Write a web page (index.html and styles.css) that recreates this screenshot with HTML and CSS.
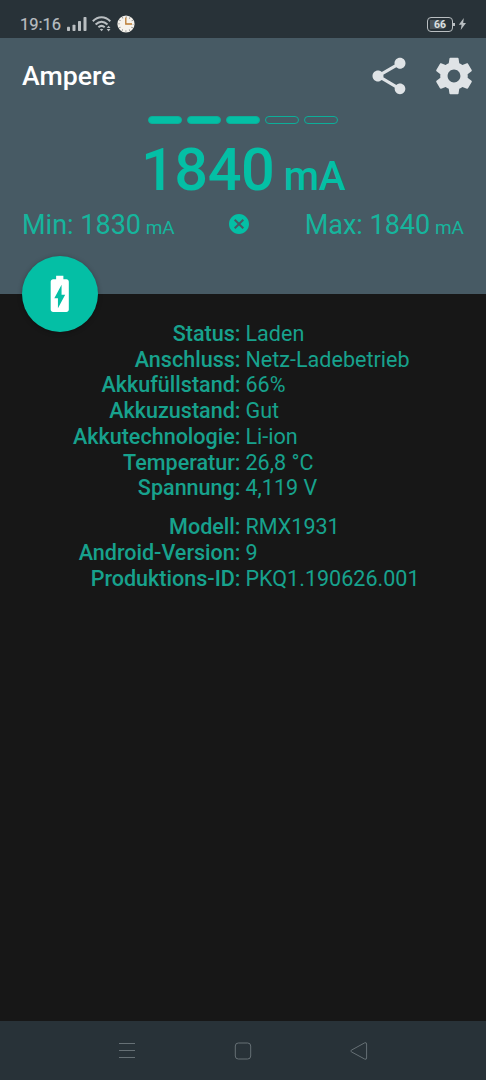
FILE: index.html
```html
<!DOCTYPE html>
<html lang="de">
<head>
<meta charset="utf-8">
<title>Ampere</title>
<link rel="stylesheet" href="styles.css">
</head>
<body>
<div class="screen">
  <div class="statusbar">
    <span class="time">19:16</span>
    <svg class="signal" width="20" height="14" viewBox="0 0 20 14"><rect x="0" y="9.7" width="3" height="4.3" rx=".7"/><rect x="5.5" y="7.7" width="3" height="6.3" rx=".7"/><rect x="11" y="4" width="3" height="10" rx=".7"/><rect x="16.5" y="0" width="3" height="14" rx=".7"/></svg>
    <svg class="wifi" width="20" height="16" viewBox="0 0 20 16"><g fill="none" stroke="#b9bec1" stroke-width="2"><path d="M.8 5.2C6-.1 13-.1 18.3 5.2"/><path d="M3.6 8.5C7.3 4.9 11.8 4.9 15.5 8.5"/><path d="M6.4 11.3C8.5 9.4 10.6 9.4 12.7 11.3"/></g><path d="M7.8 13.3Q9.6 12 11.3 13.3L9.6 15.3z M14.7 12l1.9-2.3 1.9 2.3z M14.7 13.1h3.8l-1.9 2.3z"/></svg>
    <svg class="clock" width="18" height="18" viewBox="0 0 18 18"><circle cx="9" cy="9" r="8.6" fill="#f5f2ec"/><circle cx="9" cy="9" r="7" fill="none" stroke="#777" stroke-width="1.3" stroke-dasharray=".8 2.865" stroke-dashoffset=".4"/><path d="M8.8 2.5V9H15" fill="none" stroke="#b9792f" stroke-width="1.3"/></svg>
    <span class="power">
      <span class="battery">66</span>
      <svg width="9" height="12" viewBox="0 0 9 12"><path d="M5.8 0L.8 6.8h2.8L2.7 12 8 5H5.2z"/></svg>
    </span>
  </div>
  <header class="header">
    <div class="appbar">
      <h1 class="title">Ampere</h1>
      <svg class="share" viewBox="0 0 24 24"><path d="M18 16.08c-.76 0-1.44.3-1.96.77L8.91 12.7c.05-.23.09-.46.09-.7s-.04-.47-.09-.7l7.05-4.11c.54.5 1.25.81 2.04.81 1.66 0 3-1.34 3-3s-1.34-3-3-3-3 1.34-3 3c0 .24.04.47.09.7L8.04 9.81C7.5 9.31 6.79 9 6 9c-1.66 0-3 1.34-3 3s1.34 3 3 3c.79 0 1.5-.31 2.04-.81l7.12 4.16c-.05.21-.08.43-.08.65 0 1.61 1.31 2.92 2.92 2.92s2.92-1.31 2.92-2.92-1.31-2.92-2.92-2.92z"/></svg>
      <svg class="gear" viewBox="0 0 24 24"><path d="M19.43 12.98c.04-.32.07-.64.07-.98s-.03-.66-.07-.98l2.11-1.65c.19-.15.24-.42.12-.64l-2-3.46c-.12-.22-.39-.3-.61-.22l-2.49 1c-.52-.4-1.08-.73-1.69-.98l-.38-2.65C14.46 2.18 14.25 2 14 2h-4c-.25 0-.46.18-.49.42l-.38 2.65c-.61.25-1.17.59-1.69.98l-2.49-1c-.23-.09-.49 0-.61.22l-2 3.46c-.13.22-.07.49.12.64l2.11 1.65c-.04.32-.07.65-.07.98s.03.66.07.98l-2.11 1.65c-.19.15-.24.42-.12.64l2 3.46c.12.22.39.3.61.22l2.49-1c.52.4 1.08.73 1.69.98l.38 2.65c.03.24.24.42.49.42h4c.25 0 .46-.18.49-.42l.38-2.65c.61-.25 1.17-.59 1.69-.98l2.49 1c.23.09.49 0 .61-.22l2-3.46c.12-.22.07-.49-.12-.64l-2.11-1.65zM12 15.5c-1.93 0-3.5-1.57-3.5-3.5s1.57-3.5 3.5-3.5 3.5 1.57 3.5 3.5-1.57 3.5-3.5 3.5z"/></svg>
    </div>
    <div class="level"><i class="full"></i><i class="full"></i><i class="full"></i><i></i><i></i></div>
    <div class="current">1840<small> mA</small></div>
    <div class="range">
      <span>Min: 1830<small> mA</small></span>
      <svg class="reset" viewBox="0 0 24 24"><path d="M12 2C6.47 2 2 6.47 2 12s4.47 10 10 10 10-4.47 10-10S17.53 2 12 2zm5 13.59L15.59 17 12 13.41 8.41 17 7 15.59 10.59 12 7 8.41 8.41 7 12 10.59 15.59 7 17 8.41 13.41 12 17 15.59z"/></svg>
      <span class="max">Max: 1840<small> mA</small></span>
    </div>
    <div class="fab"><svg viewBox="0 0 24 24"><path d="M15.67 4H14V2h-4v2H8.33C7.6 4 7 4.6 7 5.33v15.33C7 21.4 7.6 22 8.33 22h7.33c.74 0 1.34-.6 1.34-1.33V5.33C17 4.6 16.4 4 15.67 4zM11 20v-5.5H9L13 7v5.5h2L11 20z"/></svg></div>
  </header>
  <main class="details">
    <dl class="info">
      <dt>Status:</dt><dd>Laden</dd>
      <dt>Anschluss:</dt><dd>Netz-Ladebetrieb</dd>
      <dt>Akkufüllstand:</dt><dd>66%</dd>
      <dt>Akkuzustand:</dt><dd>Gut</dd>
      <dt>Akkutechnologie:</dt><dd>Li-ion</dd>
      <dt>Temperatur:</dt><dd>26,8 °C</dd>
      <dt>Spannung:</dt><dd>4,119 V</dd>
    </dl>
    <dl class="info">
      <dt>Modell:</dt><dd>RMX1931</dd>
      <dt>Android-Version:</dt><dd>9</dd>
      <dt>Produktions-ID:</dt><dd>PKQ1.190626.001</dd>
    </dl>
  </main>
  <nav class="navbar">
    <svg width="18" height="18" viewBox="0 0 18 18"><path d="M1 1.5h16M1 8.5h16M1 15.5h16"/></svg>
    <svg width="18" height="18" viewBox="0 0 18 18"><rect x="1.3" y="1" width="15.4" height="16" rx="3"/></svg>
    <svg width="18" height="18" viewBox="0 0 18 18"><path d="M1.3 8.2L14.6.9Q16.6 0 16.6 2V16Q16.6 18 14.6 17L1.3 9.8Q.3 9 1.3 8.2z"/></svg>
  </nav>
</div>
</body>
</html>
```
FILE: styles.css
```css
body {
  margin: 0;
  background: #171717;
  font-family: Roboto, sans-serif;
}

.screen {
  display: flex;
  flex-direction: column;
  width: 486px;
  height: 1080px;
  overflow: hidden;
}

svg { display: block; flex: none; }

.statusbar {
  display: flex;
  align-items: center;
  box-sizing: border-box;
  height: 38px;
  padding: 10px 19px 0 20px;
  background: #283238;
  color: #b9bec1;
  fill: #b9bec1;
}

.time { width: 46px; padding-top: 2px; font-size: 16.5px; line-height: 20px; -webkit-text-stroke: .2px; }
.signal { margin-left: 1px; }
.wifi { margin-left: 5px; }
.clock { margin-left: 4.5px; }

.power { display: flex; align-items: center; gap: 5px; margin-left: auto; }

.battery {
  position: relative;
  box-sizing: border-box;
  width: 26px;
  height: 15px;
  border: 1px solid #b9bec1;
  border-radius: 4px;
  background: linear-gradient(#4b5459, #4b5459) 2px 2px / 14px 9px no-repeat;
  color: #dde0e2;
  font-size: 10.5px;
  font-weight: 700;
  line-height: 13px;
  text-align: center;
}

.battery::after {
  content: "";
  position: absolute;
  top: 5px;
  right: -3px;
  width: 2px;
  height: 3px;
  background: #b9bec1;
}

.header {
  position: relative;
  box-sizing: border-box;
  height: 255.7px;
  background: #475a64;
  color: #04bfa5;
  fill: #04bfa5;
}

.appbar {
  display: flex;
  align-items: center;
  height: 75px;
  padding: 0 10.5px 0 22px;
  color: #fff;
  fill: #dfe3e6;
}

.title { flex: 1; margin: 0; padding-top: 1px; font-size: 26.7px; font-weight: 500; }
.share, .gear { width: 44px; height: 44px; }
.gear { margin-left: 20.5px; }

.level {
  display: flex;
  justify-content: center;
  gap: 5px;
  padding-top: 3px;
}

.level i {
  box-sizing: border-box;
  width: 34px;
  height: 8px;
  border: 1px solid #0cae99;
  border-radius: 4px;
}

.level .full { background: #04bfa5; }

.current {
  margin-top: 11px;
  font-size: 59.5px;
  font-weight: 500;
  letter-spacing: -.5px;
  line-height: 70px;
  text-align: center;
}

.current small { font-size: 40.5px; }

.range {
  display: grid;
  grid-template-columns: 1fr 24px 1fr;
  align-items: center;
  margin-top: -2px;
  padding: 0 22px;
  color: #16b59d;
  font-size: 27px;
  line-height: 32px;
}

.range small { font-size: 19px; }
.max { text-align: right; }
.reset { width: 24px; height: 24px; margin: -6px 0 0 -4px; }

.fab {
  position: absolute;
  left: 21.5px;
  bottom: -38px;
  display: flex;
  align-items: center;
  justify-content: center;
  width: 76px;
  height: 76px;
  border-radius: 50%;
  background: #04bfa5;
  box-shadow: 0 1px 5px rgba(0, 0, 0, .3);
  fill: #fff;
}

.fab svg { width: 43.5px; height: 43.5px; }

.details {
  flex: 1;
  padding-top: 27.4px;
  color: #17a28d;
  font-size: 21.55px;
  line-height: 25.7px;
}

.info {
  display: grid;
  grid-template-columns: 240.5px 1fr;
  column-gap: 5px;
  margin: 0 0 13.4px;
}

.info dt { font-weight: 500; text-align: right; }
.info dd { margin: 0; }

.navbar {
  display: flex;
  align-items: center;
  gap: 98px;
  box-sizing: border-box;
  height: 59.5px;
  padding: 1px 0 0 118px;
  background: #283238;
  fill: none;
  stroke: #667075;
  stroke-width: 1;
}
```
